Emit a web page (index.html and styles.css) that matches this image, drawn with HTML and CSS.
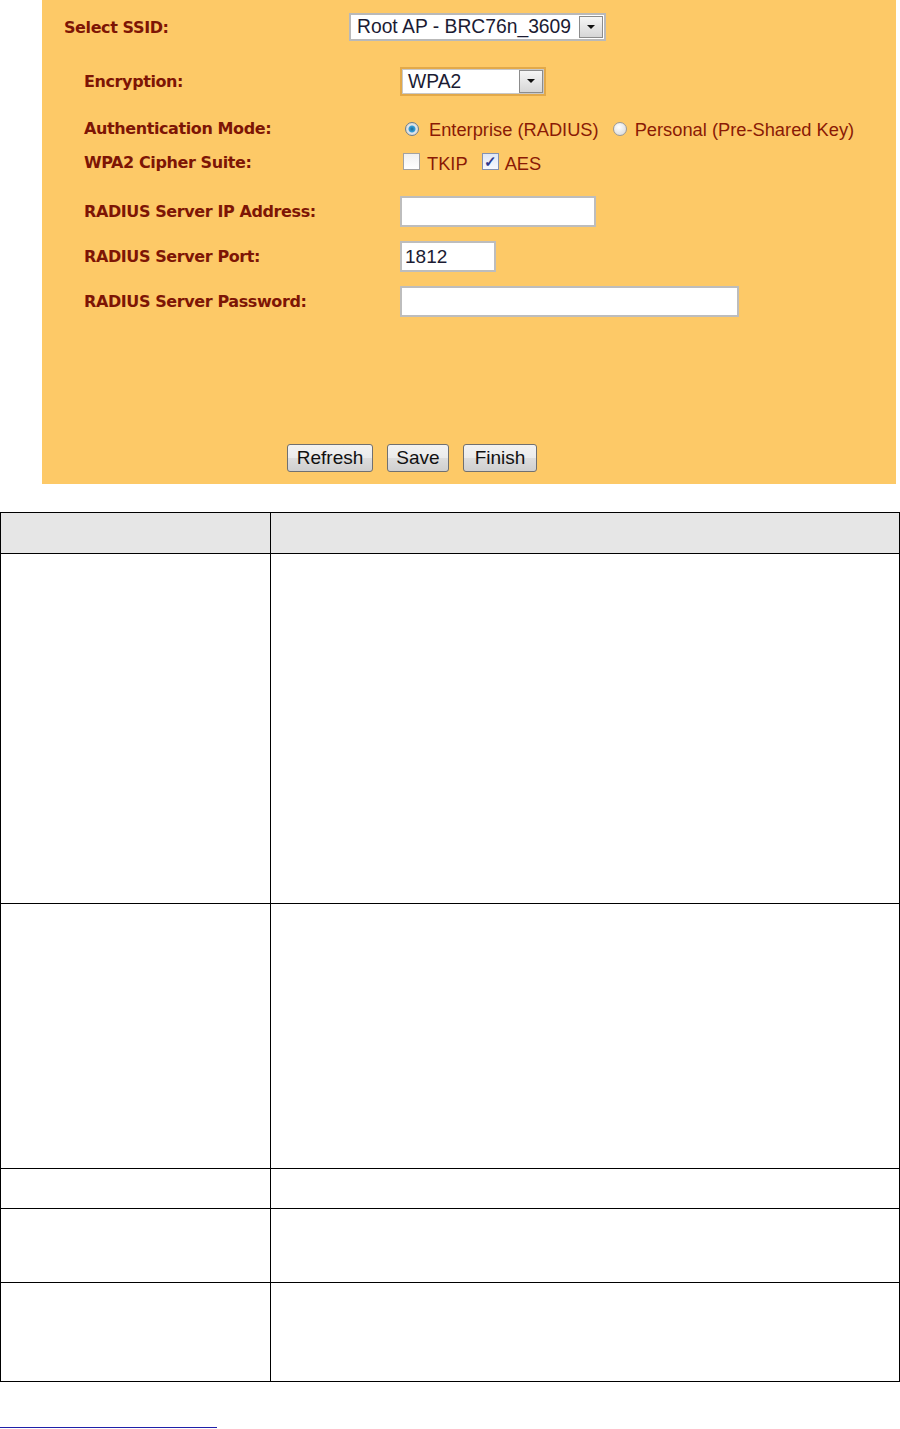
FILE: index.html
```html
<!DOCTYPE html>
<html lang="en">
<head>
  <meta charset="UTF-8">
  <title>Wireless Security</title>
  <link rel="stylesheet" href="styles.css">
</head>
<body>
  <div class="panel">
    <div class="row row-ssid">
      <div class="label label-ssid">Select SSID:</div>
      <div class="select select-ssid">
        <span class="select-text">Root AP - BRC76n_3609</span>
        <span class="select-arrow"></span>
      </div>
    </div>
    <div class="sub">
      <div class="row row-enc">
        <div class="label">Encryption:</div>
        <div class="select select-enc">
          <span class="select-text">WPA2</span>
          <span class="select-arrow"></span>
        </div>
      </div>
      <div class="row row-auth">
        <div class="label">Authentication Mode:</div>
        <div class="opts">
          <span class="radio checked"></span><span class="opt-text">Enterprise (RADIUS)</span>
          <span class="radio"></span><span class="opt-text">Personal (Pre-Shared Key)</span>
        </div>
      </div>
      <div class="row row-cipher">
        <div class="label">WPA2 Cipher Suite:</div>
        <div class="opts">
          <span class="check"></span><span class="opt-text">TKIP</span>
          <span class="check checked">&#10003;</span><span class="opt-text">AES</span>
        </div>
      </div>
      <div class="row row-ip">
        <div class="label">RADIUS Server IP Address:</div>
        <div class="input input-ip"></div>
      </div>
      <div class="row row-port">
        <div class="label">RADIUS Server Port:</div>
        <div class="input input-port">1812</div>
      </div>
      <div class="row row-pass">
        <div class="label">RADIUS Server Password:</div>
        <div class="input input-pass"></div>
      </div>
    </div>
    <div class="buttons">
      <button class="btn btn-refresh">Refresh</button>
      <button class="btn btn-save">Save</button>
      <button class="btn btn-finish">Finish</button>
    </div>
  </div>

  <table class="desc">
    <tr class="head"><td class="c1"></td><td></td></tr>
    <tr class="r1"><td class="c1"></td><td></td></tr>
    <tr class="r2"><td class="c1"></td><td></td></tr>
    <tr class="r3"><td class="c1"></td><td></td></tr>
    <tr class="r4"><td class="c1"></td><td></td></tr>
    <tr class="r5"><td class="c1"></td><td></td></tr>
  </table>

  <div class="link-line"></div>
</body>
</html>
```

FILE: styles.css
```css
body {
  margin: 0;
  background: #fff;
  font-family: "Liberation Sans", Arial, sans-serif;
}
.panel {
  margin-left: 42px;
  width: 854px;
  height: 484px;
  box-sizing: border-box;
  padding-top: 13px;
  background-color: #fdc967;
}
.row {
  display: flex;
  align-items: center;
}
.label {
  color: #7d1505;
  font-family: "DejaVu Sans", Verdana, sans-serif;
  font-weight: bold;
  font-size: 16px;
  letter-spacing: -0.4px;
  width: 316px;
  flex-shrink: 0;
}
.row-ssid {
  padding-left: 22px;
  height: 28px;
}
.label-ssid {
  width: 285px;
}
.sub {
  padding-left: 42px;
}
.row-enc { margin-top: 26px; height: 29px; }
.row-auth { margin-top: 22px; height: 24px; }
.row-cipher { margin-top: 10px; height: 24px; }
.row-ip { margin-top: 20px; height: 31px; }
.row-port { margin-top: 14px; height: 31px; }
.row-pass { margin-top: 14px; height: 31px; }

.row-auth .label { margin-top: -4px; }
.row-cipher .label { margin-top: -4px; }

.select {
  display: flex;
  align-items: center;
  height: 28px;
  box-sizing: border-box;
  background: #fff;
  border: 2px solid #b9b9b9;
  font-size: 19.3px;
  color: #1b1b33;
}
.select-text {
  flex-grow: 1;
  padding-left: 6px;
  white-space: nowrap;
}
.select-arrow {
  width: 24px;
  height: 22px;
  margin-right: 1px;
  box-sizing: border-box;
  border: 1px solid #8c8c8c;
  background: linear-gradient(#f6f6f6, #d6d6d6);
  position: relative;
}
.select-arrow::after {
  content: "";
  position: absolute;
  left: 7px;
  top: 8px;
  border-left: 4px solid transparent;
  border-right: 4px solid transparent;
  border-top: 4px solid #111;
}
.select-ssid { width: 257px; }
.select-enc {
  width: 146px;
  height: 29px;
  border-color: #e2a94a;
  box-shadow: inset 0 0 0 1px #c8c8c8;
}
.select-enc .select-arrow { height: 23px; width: 24px; }

.opts {
  display: flex;
  align-items: center;
  font-size: 18.3px;
  color: #8a1a05;
  white-space: nowrap;
}
.radio {
  width: 14px;
  height: 14px;
  margin-left: 5px;
  margin-right: 10px;
  border-radius: 50%;
  box-sizing: border-box;
  border: 1px solid #9a9a9a;
  background: radial-gradient(circle at 40% 35%, #fff, #d4d4d4);
  margin-top: -3px;
}
.radio.checked {
  background: radial-gradient(circle, #1d6a96 0, #37a0d8 3px, #e6e6e6 4px, #c8c8c8 100%);
  border-color: #6b7f8f;
}
.opt-text + .radio {
  margin-left: 14px;
  margin-right: 8px;
}
.check {
  width: 17px;
  height: 17px;
  margin-left: 3px;
  margin-right: 7px;
  box-sizing: border-box;
  border: 1px solid #a2a2a2;
  background: linear-gradient(#f0f0f0, #fff);
  margin-top: -5px;
  font-size: 15px;
  line-height: 15px;
  text-align: center;
  color: #2f3a8c;
  font-weight: bold;
}
.opt-text + .check {
  margin-left: 14px;
  margin-right: 6px;
}
.check.checked {
  border-color: #8391b0;
  background: linear-gradient(#dfe6f4, #f7f9fd);
}

.input {
  height: 31px;
  box-sizing: border-box;
  background: #fff;
  border: 2px solid #bdbdbd;
  font-size: 19px;
  color: #1b1b33;
  padding-left: 3px;
  line-height: 27px;
}
.input-ip { width: 196px; }
.input-port { width: 96px; }
.input-pass { width: 339px; }

.buttons {
  display: flex;
  gap: 14px;
  margin-top: 127px;
  padding-left: 245px;
}
.btn {
  height: 28px;
  box-sizing: border-box;
  padding: 0 4px;
  border: 1px solid #707070;
  border-radius: 3px;
  background: linear-gradient(#f2f2f2 0%, #ebebeb 50%, #dddddd 51%, #cfcfcf 100%);
  font-family: "Liberation Sans", Arial, sans-serif;
  font-size: 19px;
  color: #111;
}
.btn-refresh { width: 86px; }
.btn-save { width: 62px; }
.btn-finish { width: 74px; }

.desc {
  margin-top: 28px;
  width: 900px;
  border-collapse: collapse;
}
.desc td {
  border: 1px solid #000;
  padding: 0;
}
.desc .c1 { width: 269px; }
.head td { background: #e6e6e6; height: 40px; }
.r1 td { height: 349px; }
.r2 td { height: 264px; }
.r3 td { height: 39px; }
.r4 td { height: 73px; }
.r5 td { height: 98px; }

.link-line {
  margin-top: 45px;
  width: 217px;
  border-bottom: 1px solid #2020a8;
}
```
